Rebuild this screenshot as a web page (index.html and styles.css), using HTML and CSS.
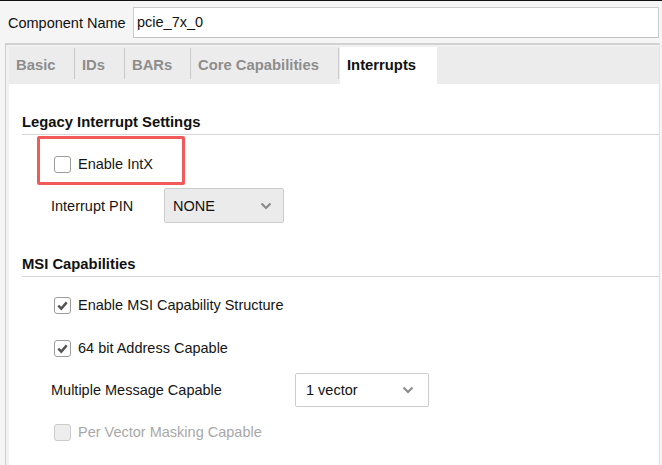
FILE: index.html
```html
<!DOCTYPE html>
<html>
<head>
<meta charset="utf-8">
<link rel="stylesheet" href="styles.css">
</head>
<body>
<div class="topline"></div>
<div class="name-row">
  <span class="name-label">Component Name</span>
  <div class="name-input">pcie_7x_0</div>
</div>
<div class="panel">
  <div class="tabs">
    <div class="tab tab-basic">Basic</div>
    <div class="tab tab-ids">IDs</div>
    <div class="tab tab-bars">BARs</div>
    <div class="tab tab-core">Core Capabilities</div>
    <div class="tab tab-active">Interrupts</div>
  </div>
  <div class="content">
    <div class="heading heading-legacy">Legacy Interrupt Settings</div>
    <div class="highlight">
      <div class="check-row">
        <span class="box"></span>
        <span>Enable IntX</span>
      </div>
    </div>
    <div class="field-row field-pin">
      <span class="field-label label-pin">Interrupt PIN</span>
      <div class="select select-none">
        <span>NONE</span>
        <svg class="chev" width="12" height="8" viewBox="0 0 12 8"><path d="M1.5 1.5 L6 6 L10.5 1.5" fill="none" stroke="#8c8c8c" stroke-width="2.2"/></svg>
      </div>
    </div>
    <div class="heading heading-msi">MSI Capabilities</div>
    <div class="check-row row-msi">
      <span class="box"><svg width="17" height="17" viewBox="0 0 17 17"><path d="M4.3 8.6 L7.3 11.6 L12.7 5.4" fill="none" stroke="#555" stroke-width="2.5"/></svg></span>
      <span>Enable MSI Capability Structure</span>
    </div>
    <div class="check-row row-64">
      <span class="box"><svg width="17" height="17" viewBox="0 0 17 17"><path d="M4.3 8.6 L7.3 11.6 L12.7 5.4" fill="none" stroke="#555" stroke-width="2.5"/></svg></span>
      <span>64 bit Address Capable</span>
    </div>
    <div class="field-row field-mmc">
      <span class="field-label label-mmc">Multiple Message Capable</span>
      <div class="select select-vector">
        <span>1 vector</span>
        <svg class="chev" width="12" height="8" viewBox="0 0 12 8"><path d="M1.5 1.5 L6 6 L10.5 1.5" fill="none" stroke="#8c8c8c" stroke-width="2.2"/></svg>
      </div>
    </div>
    <div class="check-row row-disabled">
      <span class="box box-disabled"></span>
      <span>Per Vector Masking Capable</span>
    </div>
  </div>
</div>
</body>
</html>
```

FILE: styles.css
```css
html, body {
  margin: 0;
  padding: 0;
}
body {
  height: 465px;
  overflow: hidden;
  background: #f5f5f5;
  font-family: "Liberation Sans", Arial, sans-serif;
  font-size: 14.5px;
  color: #151515;
  display: flex;
  flex-direction: column;
}
.topline {
  height: 1px;
  background: #111;
  flex: none;
}
.name-row {
  display: flex;
  align-items: center;
  padding: 6px 3px 0 8px;
  flex: none;
}
.name-label {
  width: 125px;
  color: #111;
}
.name-input {
  flex: 1;
  height: 29px;
  line-height: 29px;
  box-sizing: content-box;
  background: #fff;
  border: 1px solid #cbcbcb;
  border-bottom: 1px solid #c2c2c2;
  padding-left: 3px;
  color: #111;
}
.panel {
  flex: 1;
  display: flex;
  flex-direction: column;
  margin: 5px 2px 0 5px;
  border-top: 2px solid #d2d2d2;
  border-left: 1px solid #cdcdcd;
  border-right: 1px solid #e2e2e2;
  background: #f1f1f1;
  padding: 2px 0 0 3px;
  min-height: 0;
}
.tabs {
  display: flex;
  height: 37px;
  background: #ececec;
  flex: none;
}
.tab {
  box-sizing: border-box;
  height: 37px;
  line-height: 37px;
  padding-left: 7px;
  font-weight: bold;
  font-size: 14.8px;
  color: #8d8d8d;
  background-image: linear-gradient(#c9c9c9, #c9c9c9);
  background-repeat: no-repeat;
  background-position: right 1px;
  background-size: 1px 31px;
}
.tab-basic { width: 66px; }
.tab-ids { width: 50px; }
.tab-bars { width: 66px; }
.tab-core { width: 148px; }
.tab-active {
  width: 97px;
  margin-left: 1px;
  background: #fff;
  color: #111;
}
.content {
  flex: 1;
  background: #fff;
  padding-left: 13px;
}
.heading {
  font-weight: bold;
  font-size: 14.8px;
  line-height: 18px;
  padding-bottom: 3px;
  border-bottom: 1px solid #d6d6d6;
  color: #111;
}
.heading-legacy { margin-top: 29px; }
.heading-msi { margin-top: 32px; }
.highlight {
  box-sizing: border-box;
  width: 148px;
  height: 49px;
  margin: 1px 0 0 15px;
  border: 3px solid #f25a5a;
  border-radius: 2px;
  padding: 16px 0 0 14px;
}
.highlight .check-row {
  margin-left: 0;
}
.check-row {
  display: flex;
  align-items: center;
  height: 18px;
  margin-left: 32px;
}
.box {
  box-sizing: border-box;
  width: 17px;
  height: 17px;
  border: 1.5px solid #9c9c9c;
  border-radius: 3px;
  background: #fff;
  margin-right: 7px;
  display: flex;
  align-items: center;
  justify-content: center;
  flex: none;
}
.box svg {
  display: block;
  margin: -1.5px;
}
.box-disabled {
  border-color: #cbcbcb;
  background: #ededed;
}
.row-msi { margin-top: 19px; }
.row-64 { margin-top: 25px; }
.row-disabled {
  margin-top: 16px;
  color: #a8a8a8;
}
.field-row {
  display: flex;
  align-items: center;
  margin-left: 29px;
}
.field-pin { margin-top: 3px; }
.field-mmc { margin-top: 16px; }
.label-pin { width: 113px; }
.label-mmc { width: 244px; }
.select {
  box-sizing: border-box;
  display: flex;
  align-items: center;
  justify-content: space-between;
  border: 1px solid #cdcdcd;
  border-radius: 2px;
  color: #111;
}
.select-none {
  width: 120px;
  height: 35px;
  background: #ebebeb;
  padding: 0 11px 0 8px;
}
.select-vector {
  width: 134px;
  height: 34px;
  background: #fff;
  padding: 0 14px 0 10px;
}
.chev { display: block; }
```
